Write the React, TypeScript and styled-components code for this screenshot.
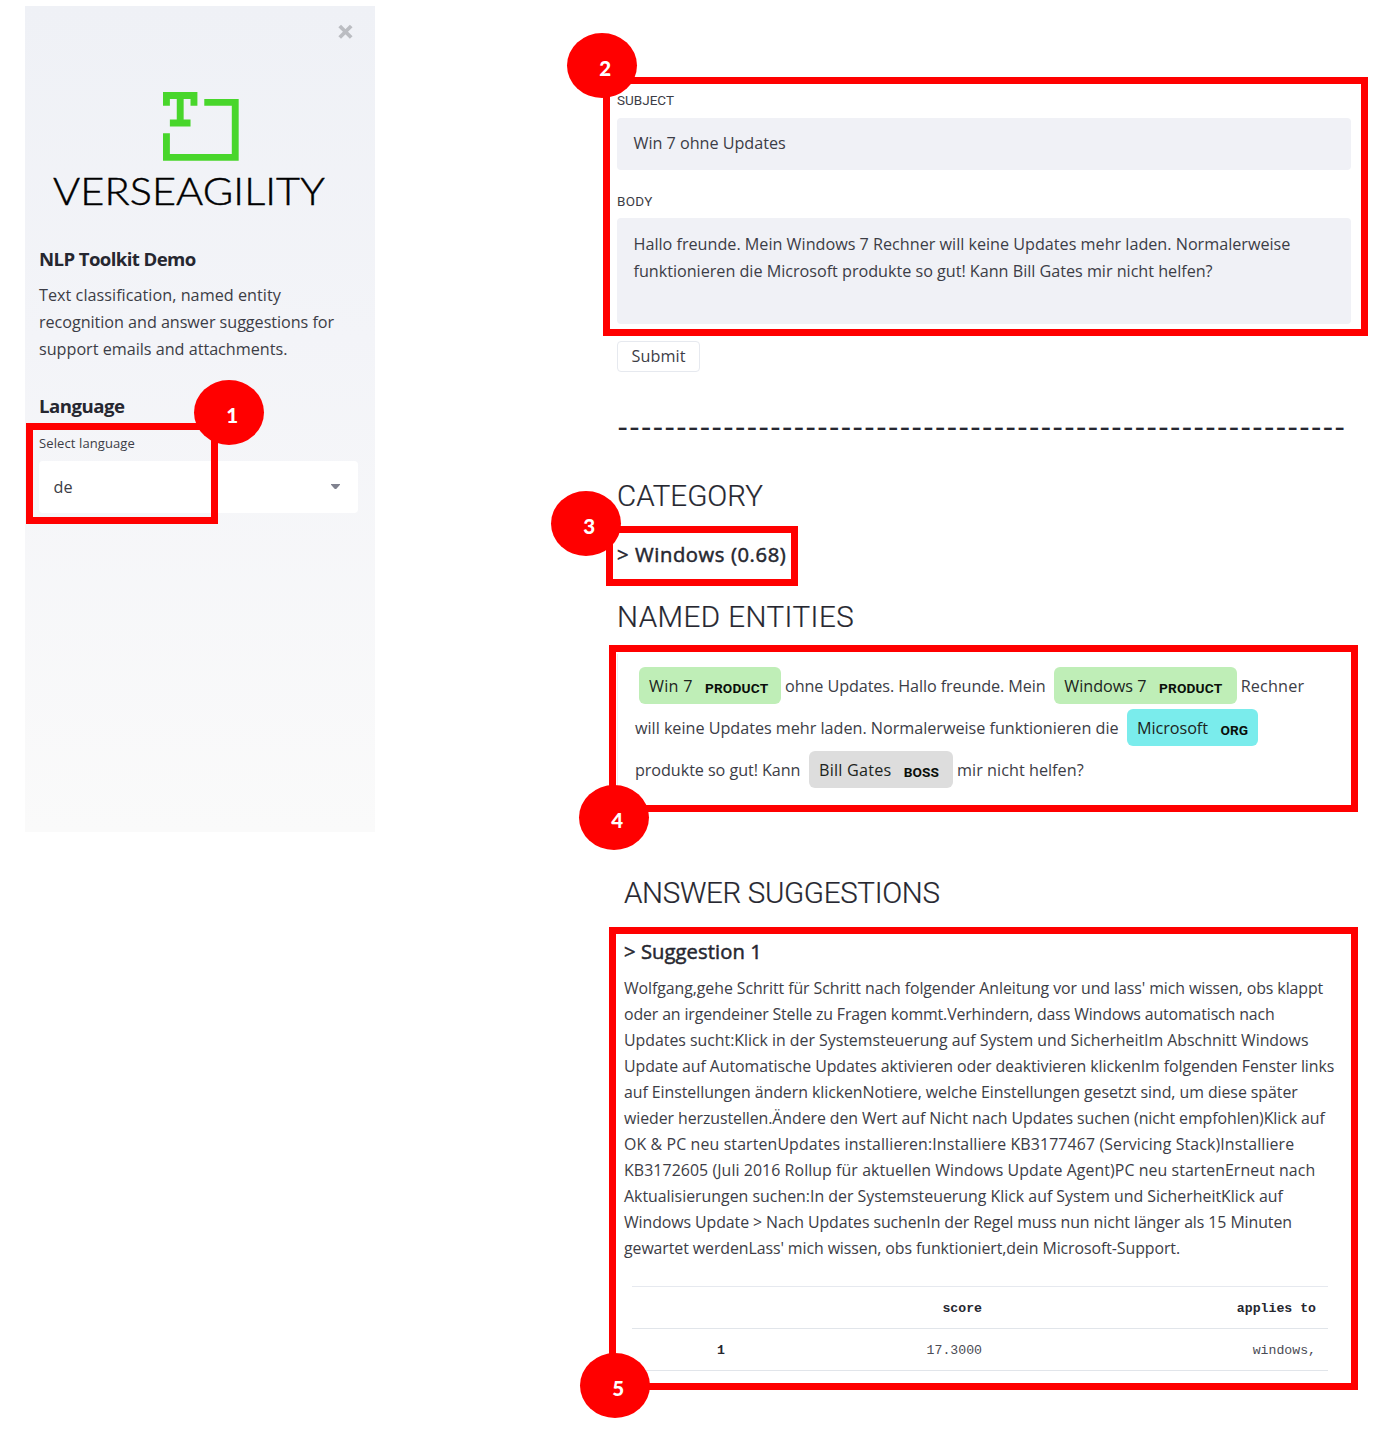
import React, { useLayoutEffect, useRef, useState } from "react";
import styled, { createGlobalStyle } from "styled-components";

const ink = "#262730";
const sans = `"Open Sans", "Noto Sans", sans-serif`;
const display = `Roboto, sans-serif`;
const mono = `"Liberation Mono", monospace`;

const GlobalStyle = createGlobalStyle`
  * { box-sizing: border-box; }
  body { margin: 0; background: #fff; color: ${ink}; font-family: ${sans}; }
  h1, h2, h3, p { margin: 0; font: inherit; }
`;

const Page = styled.div`
  position: relative;
  display: grid;
  grid-template-columns: 350px 734px;
  column-gap: 242px;
  align-items: start;
  width: 1387px;
  height: 1439px;
  padding-left: 25px;
  overflow: hidden;
`;

type TextProps = {
  $size: number;
  $weight?: number;
  $h?: number;
  $mt?: number;
  $ml?: number;
  $color?: string;
  $family?: string;
  $stroke?: number;
};

const Text = styled.div<TextProps>`
  flex: none;
  width: max-content;
  white-space: pre;
  font-family: ${(p) => p.$family ?? sans};
  font-size: ${(p) => p.$size}px;
  font-weight: ${(p) => p.$weight ?? 400};
  line-height: ${(p) => p.$h ?? 26}px;
  margin-top: ${(p) => p.$mt ?? 0}px;
  margin-left: ${(p) => p.$ml ?? 0}px;
  color: ${(p) => p.$color ?? ink};
  -webkit-text-stroke: ${(p) => p.$stroke ?? 0}px currentColor;
`;

/* A single line of text tracked so that it spans the given width. */
function Fit({ text, w, as, ...rest }: TextProps & { text: string; w: number; as?: "h1" | "h2" | "h3" | "span" | "label" }) {
  const ref = useRef<HTMLDivElement>(null);
  const [tracking, setTracking] = useState(0);
  useLayoutEffect(() => {
    const el = ref.current;
    if (!el) return;
    el.style.letterSpacing = "0px";
    const natural = el.offsetWidth;
    const t = (w - natural) / Math.max(1, text.length - 1);
    el.style.letterSpacing = `${t}px`;
    setTracking(t);
  }, [text, w]);
  return (
    <Text ref={ref} as={as} {...rest} style={{ letterSpacing: tracking, marginRight: -tracking }}>
      {text}
    </Text>
  );
}

const Sidebar = styled.aside`
  display: flex;
  flex-direction: column;
  height: 826px;
  margin-top: 6px;
  padding: 18px 17px 0 14px;
  background: linear-gradient(180deg, #eff1f6 0%, #f3f4f8 40%, #fafafa 100%);
`;

const CloseButton = styled.button`
  align-self: flex-end;
  display: flex;
  width: 16px;
  height: 16px;
  margin-right: 4px;
  padding: 0;
  border: 0;
  background: none;
`;

const Brand = styled.div`
  display: flex;
  flex-direction: column;
  margin-top: 52px;
  svg { margin-left: 124.3px; }
`;

const Wordmark = styled.div`
  margin: 8px 0 0 13.6px;
  transform: scaleX(1.12);
  transform-origin: left center;
`;

const Select = styled.div`
  display: flex;
  align-items: center;
  justify-content: space-between;
  width: 319px;
  height: 52px;
  margin-top: 4.5px;
  padding: 0 18px 0 14.5px;
  border-radius: 4px;
  background: #fff;
`;

const Main = styled.main`
  display: flex;
  flex-direction: column;
  padding-top: 90px;
`;

const Field = styled.div<{ $h: number; $mt: number; $pt: number }>`
  height: ${(p) => p.$h}px;
  margin-top: ${(p) => p.$mt}px;
  padding: ${(p) => p.$pt}px 0 0 16.5px;
  border-radius: 4px;
  background: #f0f1f6;
`;

const SubmitButton = styled.button`
  display: flex;
  align-items: center;
  justify-content: center;
  width: 83px;
  height: 31px;
  margin-top: 17px;
  padding: 0 0 1px;
  border: 1px solid #e6e9ef;
  border-radius: 4px;
  background: #fff;
`;

const Entities = styled.div`
  height: 158px;
  margin-top: 17px;
  padding: 13.5px 0 0 17px;
  border-left: 1px solid #eceef3;
`;

const EntityRow = styled.div`
  display: flex;
  align-items: flex-start;
  height: 42px;
`;

const Chip = styled.span<{ $bg: string; $w: number; $ml: number }>`
  display: flex;
  flex: none;
  width: ${(p) => p.$w}px;
  height: 37px;
  margin-left: ${(p) => p.$ml}px;
  padding-left: 10px;
  border-radius: 6px;
  background: ${(p) => p.$bg};
`;

const Answers = styled.section`
  padding-left: 7px;
  margin-top: 61px;
`;

const Table = styled.div`
  width: 696px;
  margin: 24.5px 0 0 8px;
  border-top: 1px solid #e6e9ef;
`;

const TableRow = styled.div<{ $bold?: boolean }>`
  display: grid;
  grid-template-columns: 105px 257px 334px;
  height: 42.2px;
  border-bottom: 1px solid #e1e5ea;
  font: ${(p) => (p.$bold ? 700 : 400)} 13.2px/43px ${mono};
  color: ${(p) => (p.$bold ? ink : "#4b4c55")};
  text-align: right;
`;

const Cell = styled.span<{ $bold?: boolean }>`
  padding-right: 12px;
  font-weight: ${(p) => (p.$bold ? 700 : "inherit")};
  color: ${(p) => (p.$bold ? ink : "inherit")};
`;

const Frame = styled.div<{ $x: number; $y: number; $r: number; $b: number }>`
  position: absolute;
  left: ${(p) => p.$x}px;
  top: ${(p) => p.$y}px;
  width: ${(p) => p.$r - p.$x}px;
  height: ${(p) => p.$b - p.$y}px;
  border: 7px solid #f00;
  pointer-events: none;
`;

const Badge = styled.div<{ $x: number; $y: number }>`
  position: absolute;
  left: ${(p) => p.$x}px;
  top: ${(p) => p.$y}px;
  width: 70px;
  height: 65px;
  padding: 4px 0 0 6.5px;
  border-radius: 50%;
  background: #f00;
  color: #fff;
  font: 900 20.5px/62px Lato, sans-serif;
  text-align: center;
`;

const callouts = [
  { n: 1, frame: [26, 423, 218, 524], badge: [194, 380] },
  { n: 2, frame: [603, 77, 1368, 336], badge: [567, 33] },
  { n: 3, frame: [606, 526, 798, 586], badge: [551, 491] },
  { n: 4, frame: [609, 645, 1358, 812], badge: [579, 785] },
  { n: 5, frame: [609, 927, 1358, 1390], badge: [580, 1353] },
];

const answer: [string, number][] = [
  ["Wolfgang,gehe Schritt für Schritt nach folgender Anleitung vor und lass' mich wissen, obs klappt", 699.5],
  ["oder an irgendeiner Stelle zu Fragen kommt.Verhindern, dass Windows automatisch nach", 650.5],
  ["Updates sucht:Klick in der Systemsteuerung auf System und SicherheitIm Abschnitt Windows", 684],
  ["Update auf Automatische Updates aktivieren oder deaktivieren klickenIm folgenden Fenster links", 710.5],
  ["auf Einstellungen ändern klickenNotiere, welche Einstellungen gesetzt sind, um diese später", 674],
  ["wieder herzustellen.Ändere den Wert auf Nicht nach Updates suchen (nicht empfohlen)Klick auf", 701],
  ["OK & PC neu startenUpdates installieren:Installiere KB3177467 (Servicing Stack)Installiere", 670],
  ["KB3172605 (Juli 2016 Rollup für aktuellen Windows Update Agent)PC neu startenErneut nach", 691.5],
  ["Aktualisierungen suchen:In der Systemsteuerung Klick auf System und SicherheitKlick auf", 658.5],
  ["Windows Update > Nach Updates suchenIn der Regel muss nun nicht länger als 15 Minuten", 668],
  ["gewartet werdenLass' mich wissen, obs funktioniert,dein Microsoft-Support.", 556],
];

const body = "#3c3d46";
const bodySize = 16.2;

function Entity({ name, w, tag, tagW, ...box }: { name: string; w: number; tag: string; tagW: number; $bg: string; $w: number; $ml: number }) {
  return (
    <Chip {...box}>
      <Fit as="span" text={name} w={w} $size={bodySize} $h={38} $color="#1c2420" />
      <Fit as="span" text={tag} w={tagW} $size={13.7} $weight={700} $h={42} $ml={12.5} $color="#0a0f0a" $family={display} />
    </Chip>
  );
}

export default function App() {
  return (
    <Page>
      <GlobalStyle />
      <Sidebar>
        <CloseButton aria-label="Close">
          <svg width="16" height="16" viewBox="0 0 16 16">
            <path d="M1.7 2 13.2 13.5M13.2 2 1.7 13.5" stroke="#bbbdc2" strokeWidth="3.8" fill="none" />
          </svg>
        </CloseButton>
        <Brand>
          <svg width="75.7" height="68.8" viewBox="0 0 11 10" fill="#48d62b">
            <path d="M0 0H5V2H4V1H3V4H4V5H1V4H2V1H1V2H0Z" />
            <path d="M6 1H11V10H0V6H1V9H10V2H6Z" />
          </svg>
          <Wordmark>
            <Fit text="VERSEAGILITY" w={243} $size={37} $weight={300} $h={44} $color="#000" $family="Lato, sans-serif" $stroke={0.45} />
          </Wordmark>
        </Brand>
        <Fit as="h2" text="NLP Toolkit Demo" w={157} $size={18.6} $weight={700} $h={26} $mt={33.5} />
        <Fit text="Text classification, named entity" w={242} $size={bodySize} $h={27} $mt={9.5} $color={body} />
        <Fit text="recognition and answer suggestions for" w={295} $size={bodySize} $h={27} $color={body} />
        <Fit text="support emails and attachments." w={248.5} $size={bodySize} $h={27} $color={body} />
        <Fit as="h2" text="Language" w={85.5} $size={18.6} $weight={700} $h={26} $mt={30.5} />
        <Fit as="label" text="Select language" w={95.5} $size={13} $h={26} $mt={11} $color={body} />
        <Select>
          <Fit as="span" text="de" w={19} $size={bodySize} $color={body} />
          <svg width="9" height="5" viewBox="0 0 9 5"><path d="M0 0H9V.8L5.2 5H3.8L0 .8Z" fill="#80828f" /></svg>
        </Select>
      </Sidebar>

      <Main>
        <Fit as="label" text="SUBJECT" w={57} $size={13.5} $h={20.5} $color={body} $family={display} />
        <Field $h={52} $mt={7} $pt={12.5}>
          <Fit text="Win 7 ohne Updates" w={152.5} $size={bodySize} $color={body} />
        </Field>
        <Fit as="label" text="BODY" w={35} $size={13.5} $h={20.5} $mt={21} $color={body} $family={display} />
        <Field $h={106} $mt={7.3} $pt={12.5}>
          <Fit text="Hallo freunde. Mein Windows 7 Rechner will keine Updates mehr laden. Normalerweise" w={657} $size={bodySize} $h={27} $color={body} />
          <Fit text="funktionieren die Microsoft produkte so gut! Kann Bill Gates mir nicht helfen?" w={579} $size={bodySize} $h={27} $color={body} />
        </Field>
        <SubmitButton>
          <Fit as="span" text="Submit" w={54.5} $size={bodySize} $color={body} />
        </SubmitButton>
        <Fit text={"-".repeat(62)} w={725.5} $size={32} $h={40} $mt={34.5} $ml={1.3} $family={display} />

        <Fit as="h1" text="CATEGORY" w={146} $size={29.5} $weight={300} $h={40} $mt={29} $family={display} $stroke={0.2} />
        <Fit as="h3" text="> Windows (0.68)" w={169} $size={20.2} $h={30} $mt={23} $stroke={0.5} />
        <Fit as="h1" text="NAMED ENTITIES" w={237} $size={29.5} $weight={300} $h={40} $mt={28} $family={display} $stroke={0.2} />

        <Entities>
          <EntityRow>
            <Entity name="Win 7" w={43} tag="PRODUCT" tagW={63} $bg="#bfeeb7" $w={142} $ml={4} />
            <Fit as="span" text="ohne Updates. Hallo freunde. Mein" w={261} $size={bodySize} $h={38} $ml={4} $color={body} />
            <Entity name="Windows 7" w={82} tag="PRODUCT" tagW={63} $bg="#bfeeb7" $w={182.5} $ml={8.5} />
            <Fit as="span" text="Rechner" w={63} $size={bodySize} $h={38} $ml={4} $color={body} />
          </EntityRow>
          <EntityRow>
            <Fit as="span" text="will keine Updates mehr laden. Normalerweise funktionieren die" w={483.5} $size={bodySize} $h={38} $color={body} />
            <Entity name="Microsoft" w={70.5} tag="ORG" tagW={28} $bg="#7aecec" $w={131} $ml={8.5} />
          </EntityRow>
          <EntityRow>
            <Fit as="span" text="produkte so gut! Kann" w={165.5} $size={bodySize} $h={38} $color={body} />
            <Entity name="Bill Gates" w={72} tag="BOSS" tagW={35} $bg="#dddddd" $w={144} $ml={8.5} />
            <Fit as="span" text="mir nicht helfen?" w={126.5} $size={bodySize} $h={38} $ml={4} $color={body} />
          </EntityRow>
        </Entities>

        <Answers>
          <Fit as="h1" text="ANSWER SUGGESTIONS" w={315.5} $size={29.5} $weight={300} $h={40} $family={display} $stroke={0.2} />
          <Fit as="h3" text="> Suggestion 1" w={138} $size={20.2} $h={30} $mt={23} $stroke={0.5} />
          <div>
            {answer.map(([line, w], i) => (
              <Fit key={i} text={line} w={w} $size={15.9} $h={26.06} $mt={i === 0 ? 8.8 : 0} $color={body} />
            ))}
          </div>
          <Table>
            <TableRow $bold><Cell /><Cell>score</Cell><Cell>applies to</Cell></TableRow>
            <TableRow><Cell $bold>1</Cell><Cell>17.3000</Cell><Cell>windows,</Cell></TableRow>
          </Table>
        </Answers>
      </Main>

      {callouts.map(({ n, frame: [x, y, r, b] }) => (
        <Frame key={n} $x={x} $y={y} $r={r} $b={b} />
      ))}
      {callouts.map(({ n, badge: [x, y] }) => (
        <Badge key={n} $x={x} $y={y}>{n}</Badge>
      ))}
    </Page>
  );
}
